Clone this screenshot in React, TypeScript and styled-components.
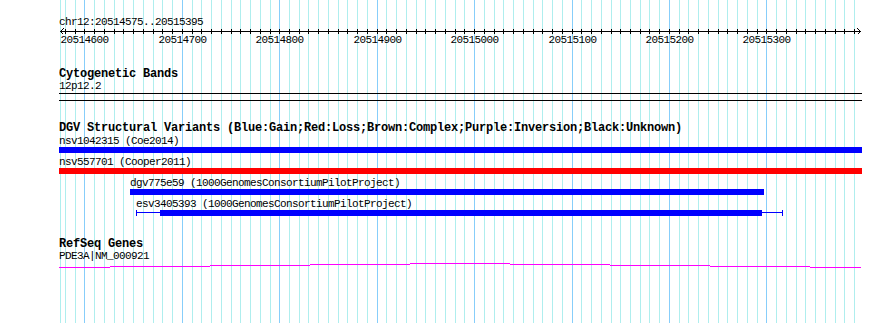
import styled, { createGlobalStyle } from "styled-components";

const VIEW_START = 20514575;
const VIEW_END = 20515395;
const PANEL_WIDTH = 803;
const PANEL_HEIGHT = 323;
const BP_PX = 0.9743;
const ANCHOR_BP = 20514600;
const ANCHOR_X = 25.4;

const toX = (bp: number) => Math.round(ANCHOR_X + (bp - ANCHOR_BP) * BP_PX);
const clampX = (x: number) => Math.max(0, Math.min(PANEL_WIDTH, x));

const ticks: number[] = [];
for (let bp = Math.ceil(VIEW_START / 10) * 10; bp <= VIEW_END; bp += 10) ticks.push(bp);
const majorTicks = ticks.filter((bp) => bp % 100 === 0);

type Variant = {
  id: string;
  source: string;
  from: number;
  to: number;
  color: string;
  thickFrom?: number;
  thickTo?: number;
};

const variants: Variant[] = [
  { id: "nsv1042315", source: "Coe2014", from: 20514100, to: 20516000, color: "#0000ff" },
  { id: "nsv557701", source: "Cooper2011", from: 20514100, to: 20516000, color: "#ff0000" },
  { id: "dgv775e59", source: "1000GenomesConsortiumPilotProject", from: 20514647, to: 20515298, color: "#0000ff" },
  {
    id: "esv3405393",
    source: "1000GenomesConsortiumPilotProject",
    from: 20514653,
    to: 20515317,
    thickFrom: 20514678,
    thickTo: 20515295,
    color: "#0000ff",
  },
];

// intron "hat" of the gene, drawn as pixel steps (x start, x end, row)
const hatSteps: [number, number, number][] = [
  [0, 51, 5],
  [51, 151, 4],
  [151, 251, 3],
  [251, 351, 2],
  [351, 451, 1],
  [451, 551, 2],
  [551, 651, 3],
  [651, 751, 4],
  [751, 802, 5],
];

const GlobalStyle = createGlobalStyle`
  html, body {
    margin: 0;
    padding: 0;
    background: #ffffff;
  }
  body {
    font-family: "Liberation Mono", "DejaVu Sans Mono", monospace;
    color: #000000;
  }
`;

const Panel = styled.div`
  position: relative;
  width: ${PANEL_WIDTH}px;
  height: ${PANEL_HEIGHT}px;
  margin-left: 59px;
  overflow: hidden;
  background: #ffffff;
`;

const GridLayer = styled.svg`
  position: absolute;
  top: 0;
  left: 0;
  z-index: 0;
  shape-rendering: crispEdges;
`;

const Tracks = styled.div`
  position: relative;
  z-index: 1;
  display: flex;
  flex-direction: column;
`;

const Track = styled.section<{ $top: number }>`
  display: flex;
  flex-direction: column;
  margin-top: ${(p) => p.$top}px;
`;

const TrackTitle = styled.h3`
  margin: 0;
  font-family: "Liberation Mono", "DejaVu Sans Mono", monospace;
  font-size: 12px;
  font-weight: 700;
  line-height: 11px;
  letter-spacing: -0.2px;
  white-space: nowrap;
`;

const Label = styled.div`
  font-size: 11px;
  line-height: 12px;
  letter-spacing: -0.6px;
  white-space: nowrap;
`;

const Axis = styled.svg`
  display: block;
  overflow: visible;
  shape-rendering: crispEdges;
`;

const TickLabels = styled.div`
  position: relative;
  height: 12px;
`;

const TickLabel = styled.span`
  position: absolute;
  top: 0;
  transform: translateX(-50%);
  font-size: 11px;
  line-height: 12px;
  letter-spacing: -0.6px;
  white-space: nowrap;
`;

const Band = styled.div`
  box-sizing: border-box;
  width: 100%;
  height: 8px;
  margin-top: 1px;
  border-top: 1px solid #000000;
  border-bottom: 1px solid #000000;
`;

const VariantList = styled.div`
  display: flex;
  flex-direction: column;
  padding-top: 1px;
`;

const FeatureRow = styled.div`
  display: flex;
  height: 21px;
`;

const Glyph = styled.div`
  display: flex;
  flex-direction: column;
`;

const Bar = styled.div<{ $color: string }>`
  height: 6px;
  background: ${(p) => p.$color};
`;

const Segments = styled.div`
  display: flex;
  align-items: flex-start;
  height: 6px;
`;

const Cap = styled.div<{ $color: string }>`
  flex: none;
  width: 1px;
  height: 6px;
  background: ${(p) => p.$color};
`;

const Thin = styled.div<{ $color: string }>`
  flex: none;
  height: 1px;
  margin-top: 2px;
  background: ${(p) => p.$color};
`;

const Thick = styled.div<{ $color: string }>`
  flex: none;
  height: 6px;
  background: ${(p) => p.$color};
`;

const Transcript = styled.svg`
  display: block;
  shape-rendering: crispEdges;
`;

const Grid = () => (
  <GridLayer width={PANEL_WIDTH} height={PANEL_HEIGHT}>
    <rect x={1} y={0} width={1} height={PANEL_HEIGHT} fill="#afeeee" />
    {ticks.map((bp) => (
      <rect
        key={bp}
        x={toX(bp)}
        y={0}
        width={1}
        height={PANEL_HEIGHT}
        fill={bp % 100 === 0 ? "#87cefa" : "#afeeee"}
      />
    ))}
  </GridLayer>
);

const Ruler = () => (
  <Track $top={16}>
    <Label>
      chr12:{VIEW_START}..{VIEW_END}
    </Label>
    <Axis width={PANEL_WIDTH} height={6}>
      <rect x={1} y={3} width={800} height={1} fill="#000" />
      {ticks.map((bp) => (
        <rect key={bp} x={toX(bp)} y={1} width={1} height={5} fill="#000" />
      ))}
      <path d="M4.5 0.5 L1.5 3.5 L4.5 6.5" fill="none" stroke="#000" strokeWidth={1} />
      <path d="M798.5 0.5 L801.5 3.5 L798.5 6.5" fill="none" stroke="#000" strokeWidth={1} />
    </Axis>
    <TickLabels>
      {majorTicks.map((bp) => (
        <TickLabel key={bp} style={{ left: toX(bp) + 0.5 }}>
          {bp}
        </TickLabel>
      ))}
    </TickLabels>
  </Track>
);

const VariantGlyph = ({ v }: { v: Variant }) => {
  const left = clampX(toX(v.from));
  const right = clampX(toX(v.to));
  let body;
  if (v.thickFrom !== undefined && v.thickTo !== undefined) {
    const tl = toX(v.thickFrom);
    const tr = toX(v.thickTo);
    body = (
      <Segments>
        <Cap $color={v.color} />
        <Thin $color={v.color} style={{ width: tl - left - 1 }} />
        <Thick $color={v.color} style={{ width: tr - tl }} />
        <Thin $color={v.color} style={{ width: right - tr - 1 }} />
        <Cap $color={v.color} />
      </Segments>
    );
  } else {
    body = <Bar $color={v.color} />;
  }
  return (
    <FeatureRow>
      <Glyph style={{ marginLeft: left, width: right - left }}>
        <Label>
          {v.id} ({v.source})
        </Label>
        {body}
      </Glyph>
    </FeatureRow>
  );
};

export default function App() {
  return (
    <>
      <GlobalStyle />
      <Panel>
        <Grid />
        <Tracks>
          <Ruler />

          <Track $top={23}>
            <TrackTitle>Cytogenetic Bands</TrackTitle>
            <Label>12p12.2</Label>
            <Band />
          </Track>

          <Track $top={22}>
            <TrackTitle>
              DGV Structural Variants (Blue:Gain;Red:Loss;Brown:Complex;Purple:Inversion;Black:Unknown)
            </TrackTitle>
            <VariantList>
              {variants.map((v) => (
                <VariantGlyph key={v.id} v={v} />
              ))}
            </VariantList>
          </Track>

          <Track $top={20}>
            <TrackTitle>RefSeq Genes</TrackTitle>
            <Label>PDE3A|NM_000921</Label>
            <Transcript width={PANEL_WIDTH} height={6}>
              {hatSteps.map(([x1, x2, row]) => (
                <rect key={x1} x={x1} y={row} width={x2 - x1} height={1} fill="#ff00ff" />
              ))}
            </Transcript>
          </Track>
        </Tracks>
      </Panel>
    </>
  );
}
